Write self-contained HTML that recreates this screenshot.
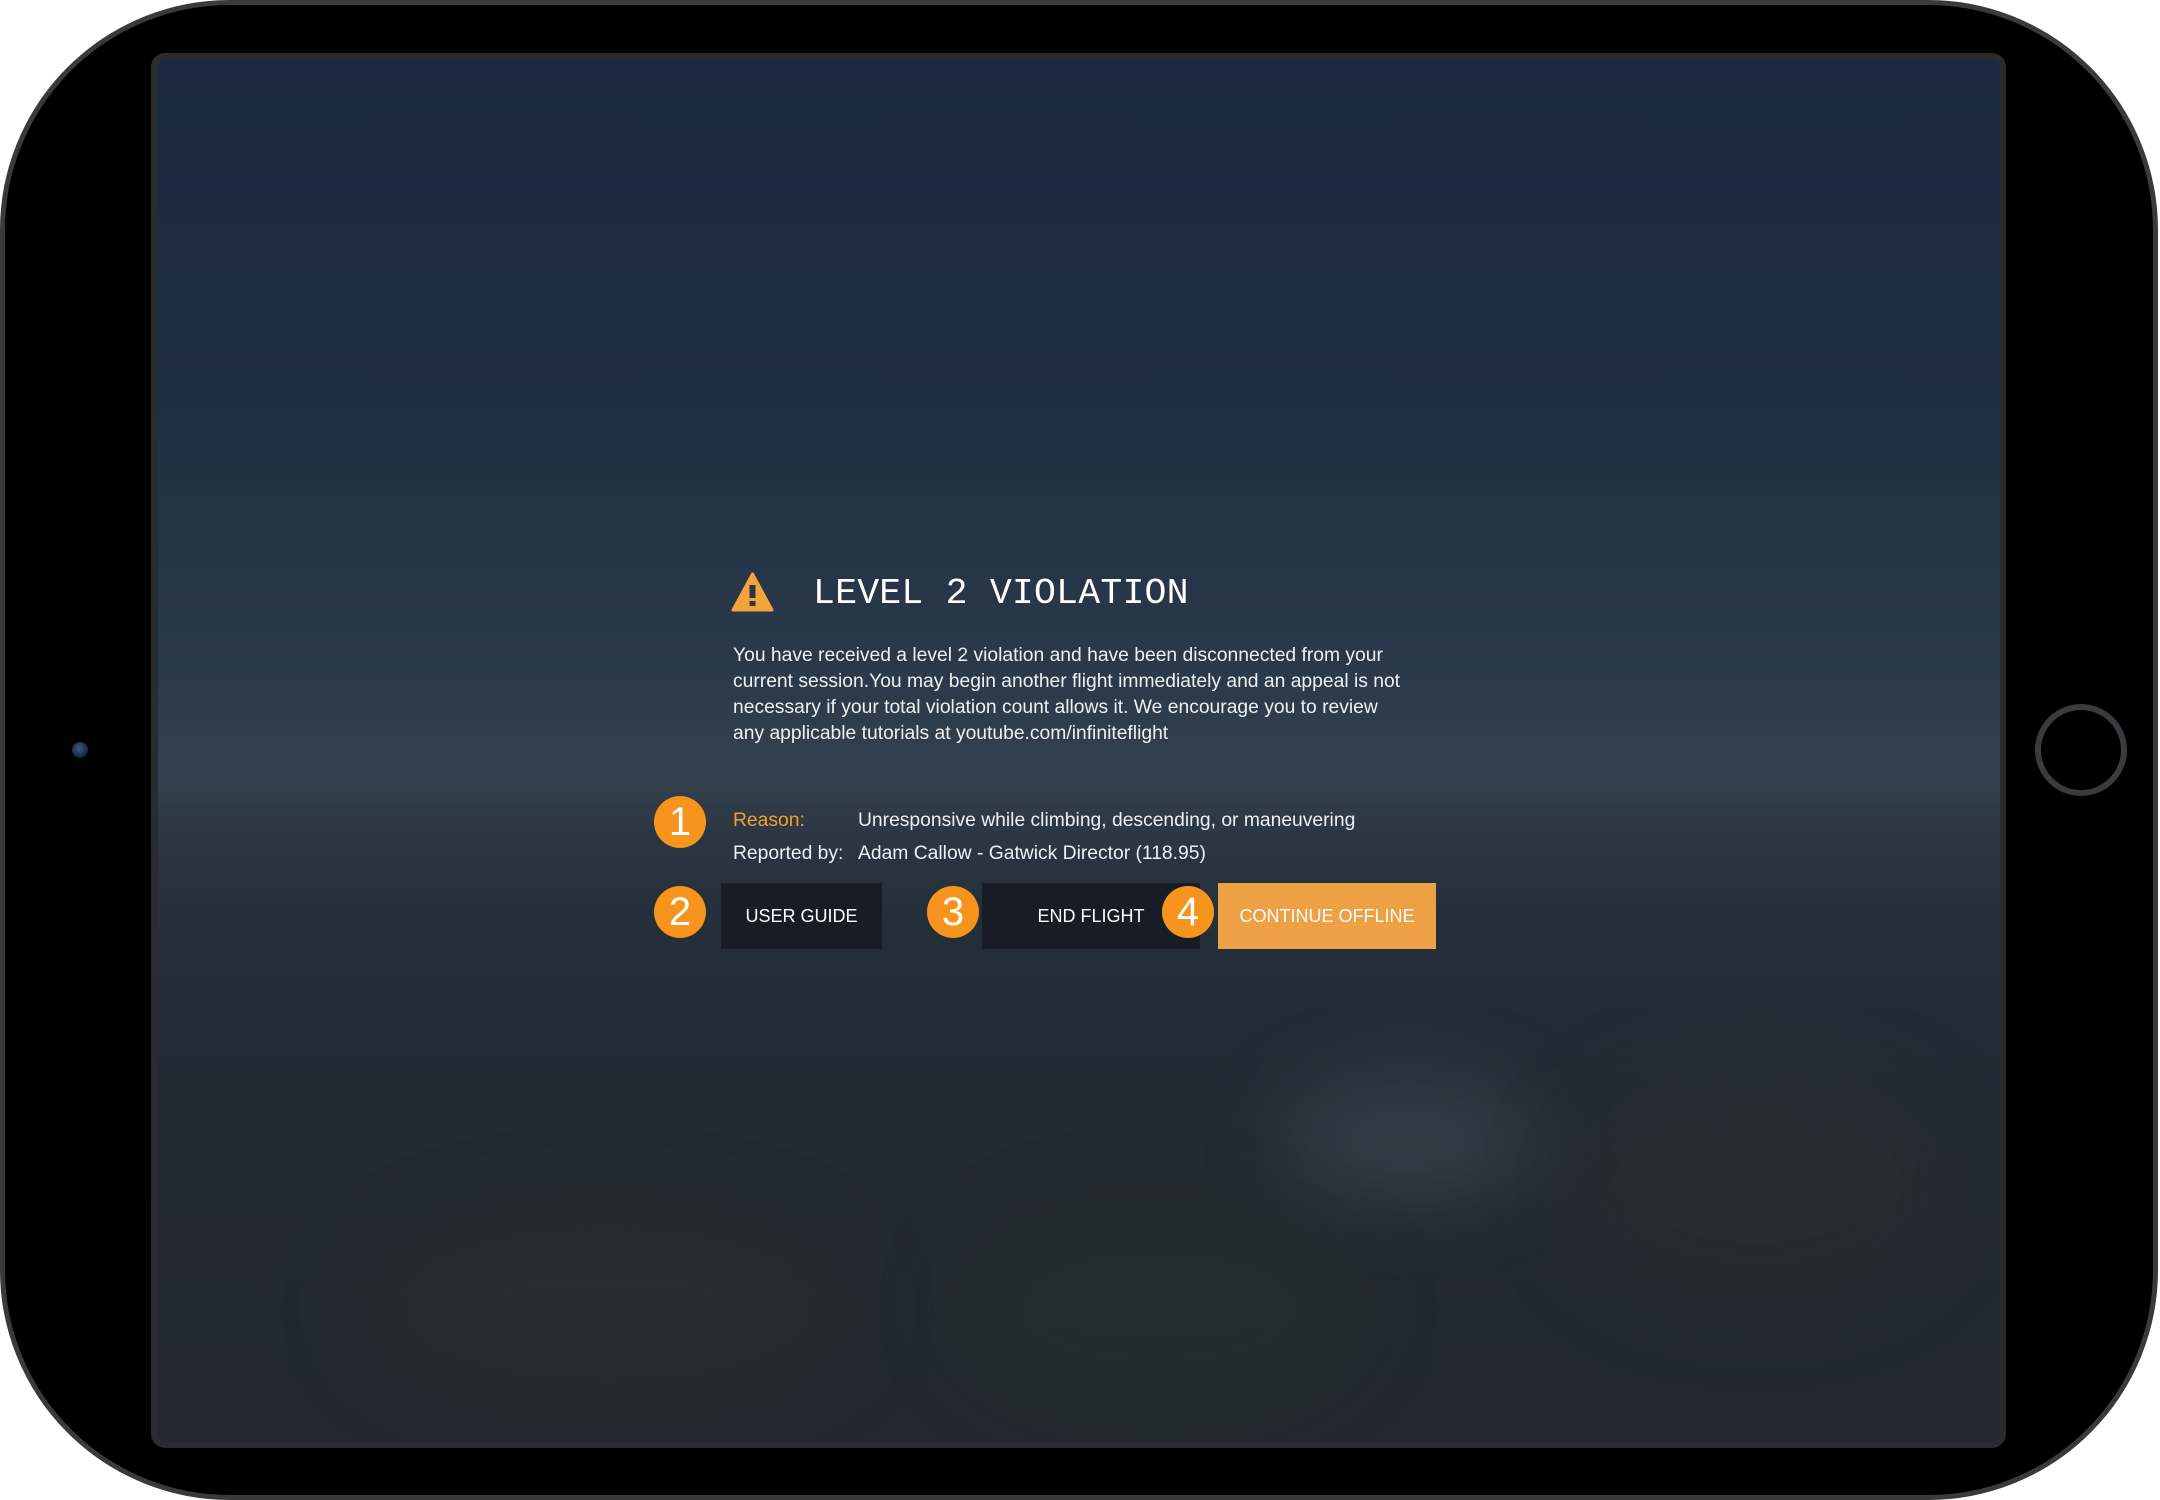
<!DOCTYPE html>
<html><head><meta charset="utf-8"><style>
*{margin:0;padding:0;box-sizing:border-box}
body{width:2160px;height:1500px;background:#fff;position:relative;overflow:hidden;font-family:"Liberation Sans",sans-serif}
.ipad{position:absolute;left:0;top:0;width:2158px;height:1500px;border-radius:230px;background:#000;border:5px solid #3a3a3c}
.frame{position:absolute;left:151px;top:53px;width:1855px;height:1395px;background:#2b2b2d;border-radius:14px}
.screen{position:absolute;left:158px;top:59px;width:1842px;height:1383px;border-radius:8px;overflow:hidden;
background:linear-gradient(180deg,#1c2940 0%,#1f2d42 25%,#2b3a4b 45%,#33414e 52%,#2b3743 56%,#252f39 62%,#222a32 75%,#21282f 100%)}
.blob{position:absolute;border-radius:50%;filter:blur(40px)}
.cam{position:absolute;left:72px;top:742px;width:16px;height:16px;border-radius:50%;background:radial-gradient(circle at 45% 40%,#3a5a8a,#1a2438 70%)}
.home{position:absolute;left:2035px;top:704px;width:92px;height:92px;border-radius:50%;border:6px solid #3a3b3f}
.t{position:absolute;color:#fff;white-space:nowrap}
.title{left:813px;top:573px;font-family:"Liberation Mono",monospace;font-size:36.5px;letter-spacing:0.2px}
.p{left:733px;font-size:19.3px;color:#eef0f2}
.num{position:absolute;width:52px;height:52px;border-radius:50%;background:#f7941d;color:#fff;font-size:40px;text-align:center;line-height:52px;font-weight:300}
.btn{position:absolute;top:883px;height:66px;background:rgba(22,26,34,0.85);color:#fff;font-size:18px;text-align:center;line-height:66px}
</style></head><body>
<div class="ipad"></div>
<div class="frame"></div>
<div class="screen">
 <div class="blob" style="left:1120px;top:1020px;width:260px;height:120px;background:rgba(110,120,130,0.25)"></div>
 <div class="blob" style="left:200px;top:1150px;width:500px;height:200px;background:rgba(55,55,45,0.25)"></div>
 <div class="blob" style="left:800px;top:1150px;width:400px;height:200px;background:rgba(40,55,40,0.3)"></div>
 <div class="blob" style="left:1400px;top:1000px;width:400px;height:250px;background:rgba(55,55,52,0.2)"></div>
</div>
<div class="cam"></div>
<div class="home"></div>

<svg style="position:absolute;left:731px;top:572px" width="43" height="40" viewBox="0 0 43 40"><path d="M21.5 2 L41 38 L2 38 Z" fill="#f2a33a" stroke="#f2a33a" stroke-width="3" stroke-linejoin="round"/><rect x="18.5" y="13" width="6" height="13" fill="#2a3548"/><rect x="18.5" y="29" width="6" height="5" fill="#2a3548"/></svg>
<div class="t title">LEVEL 2 VIOLATION</div>
<div class="t p" style="top:645px">You have received a level 2 violation and have been disconnected from your</div>
<div class="t p" style="top:671px">current session.You may begin another flight immediately and an appeal is not</div>
<div class="t p" style="top:697px">necessary if your total violation count allows it. We encourage you to review</div>
<div class="t p" style="top:723px">any applicable tutorials at youtube.com/infiniteflight</div>

<div class="num" style="left:654px;top:796px">1</div>
<div class="t p" style="top:810px;color:#f0a030">Reason:</div>
<div class="t p" style="top:810px;left:858px">Unresponsive while climbing, descending, or maneuvering</div>
<div class="t p" style="top:843px">Reported by:</div>
<div class="t p" style="top:843px;left:858px">Adam Callow - Gatwick Director (118.95)</div>

<div class="btn" style="left:721px;width:161px">USER GUIDE</div>
<div class="btn" style="left:982px;width:218px">END FLIGHT</div>
<div class="btn" style="left:1218px;width:218px;background:#eda044">CONTINUE OFFLINE</div>
<div class="num" style="left:654px;top:886px">2</div>
<div class="num" style="left:927px;top:886px">3</div>
<div class="num" style="left:1162px;top:886px">4</div>
</body></html>
